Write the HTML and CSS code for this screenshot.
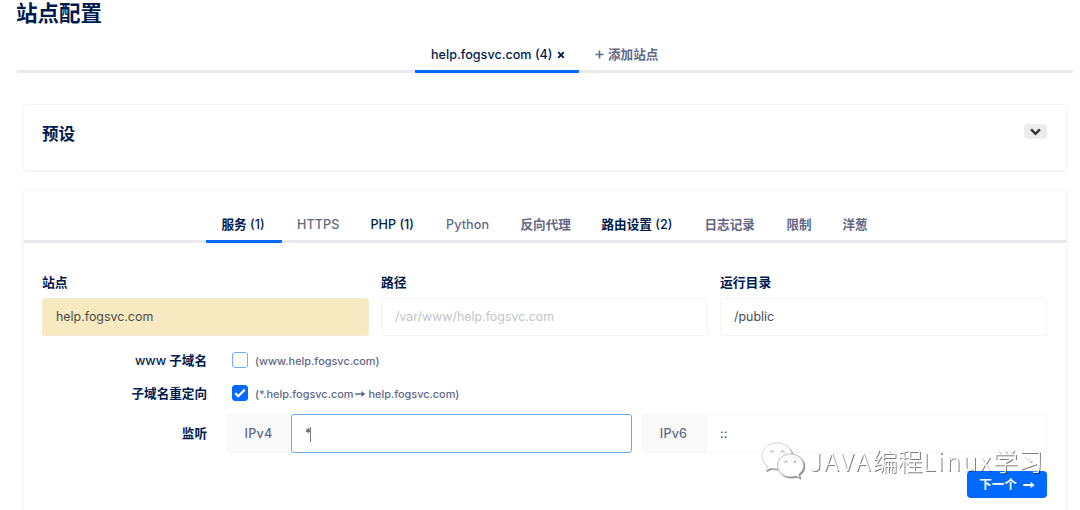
FILE: index.html
```html
<!DOCTYPE html>
<html lang="zh-CN">
<head>
<meta charset="utf-8">
<title>站点配置</title>
<link rel="stylesheet" href="styles.css">
</head>
<body>
<main class="page">
  <h1 class="title">站点配置</h1>
  <nav class="site-tabs">
    <a class="tab active">help.fogsvc.com (4)
      <svg class="close" viewBox="0 0 8 8"><path d="M1.2 1.2l5.6 5.6M6.8 1.2L1.2 6.8"/></svg>
    </a>
    <a class="tab add"><svg class="plus" viewBox="0 0 9 9"><path d="M4.5 .5v8M.5 4.5h8"/></svg>添加站点</a>
  </nav>
  <section class="card preset">
    <h2 class="preset-title">预设</h2>
    <button class="toggle"><svg class="chevron" viewBox="0 0 10 7"><path d="M1 1.2l4 4 4-4"/></svg></button>
  </section>
  <section class="card config">
    <nav class="tabs">
      <a class="tab active"><b>服务</b> (1)</a>
      <a class="tab plain">HTTPS</a>
      <a class="tab used">PHP (1)</a>
      <a class="tab plain">Python</a>
      <a class="tab">反向代理</a>
      <a class="tab used"><b>路由设置</b> (2)</a>
      <a class="tab">日志记录</a>
      <a class="tab">限制</a>
      <a class="tab">洋葱</a>
    </nav>
    <div class="fields">
      <div class="field"><label class="label">站点</label><div class="input changed">help.fogsvc.com</div></div>
      <div class="field"><label class="label">路径</label><div class="input placeholder">/var/www/help.fogsvc.com</div></div>
      <div class="field"><label class="label">运行目录</label><div class="input">/public</div></div>
    </div>
    <div class="row www">
      <label class="row-label"><span class="latin">www</span> 子域名</label>
      <span class="check"></span>
      <span class="hint">(www.help.fogsvc.com)</span>
    </div>
    <div class="row redirect">
      <label class="row-label">子域名重定向</label>
      <span class="check checked"><svg class="tick" viewBox="0 0 12 10"><path d="M1.2 5.2l3.1 3L10.8 1.6"/></svg></span>
      <span class="hint">(*.help.fogsvc.com<svg class="arrow" viewBox="0 0 12 8"><path class="shaft" d="M1 4h7"/><path class="head" d="M7 .8L11.2 4 7 7.2z"/></svg>help.fogsvc.com)</span>
    </div>
    <div class="row listen">
      <label class="row-label">监听</label>
      <div class="group ipv4"><span class="addon">IPv4</span><div class="value focused">*<i class="caret"></i></div></div>
      <div class="group ipv6"><span class="addon">IPv6</span><div class="value">::</div></div>
    </div>
    <div class="actions">
      <button class="next">下一个<svg class="next-arrow" viewBox="0 0 12 8"><path class="shaft" d="M1 4h8"/><path class="head" d="M7.6 .8L11.6 4 7.6 7.2z"/></svg></button>
    </div>
  </section>
  <div class="watermark">
    <svg class="wechat" viewBox="0 0 44 38">
      <path class="back" d="M16 1C7.500 1 1 6.800 1 14c0 4.300 2.200 7.800 5.500 10.200L5 28.500l5-2.400c2 .6 4 .9 6.500.9 8 0 14.500-5.500 14.500-13S24.500 1 16 1z"/>
      <path class="front" d="M29.500 12C22 12 16.500 17 16.500 23.500S22 35 29.500 35c2 0 3.800-.3 5.400-.9l4 2-1.200-3.600c3-2 5-5.200 5-9C42.700 17 37 12 29.500 12z"/>
      <path class="eye" d="M9 10.500q1.700-3.500 3.400 0M20 10.500q1.700-3.500 3.400 0M23.500 20.500q1.500-3 3 0M32.500 20.500q1.500-3 3 0"/>
    </svg>
    <span class="watermark-text"><span class="wide">JAVA</span>编程<span class="wide">Linux</span>学习</span>
  </div>
</main>
</body>
</html>
```
FILE: styles.css
```css
* { box-sizing: border-box; }
body {
  margin: 0;
  background: #fff;
  color: #001b4e;
  font: 500 12.6px/20px Inter, "Noto Sans CJK SC", sans-serif;
}
.page { position: relative; height: 510px; overflow: hidden; }
.title { margin: 0 0 0 16px; padding-top: 1px; height: 38px; font-size: 21.5px; line-height: 25px; font-weight: 700; }
.site-tabs {
  display: grid;
  grid-template-columns: 164px 96px;
  justify-content: center;
  height: 35px;
  margin: 0 7px 0 17px;
  border-bottom: 3px solid #e8eaef;
}
.tab { padding-left: 15.5px; color: #5f6986; font-weight: 700; white-space: nowrap; }
.tab.active { color: #001b4e; font-weight: 450; border-bottom: 3px solid #006aff; border-radius: 1px; }
.tab.used { color: #001b4e; font-weight: 450; }
.tab.plain { font-weight: 450; letter-spacing: .1px; }
.tab b { font-weight: 700; }
.site-tabs .tab { height: 35px; padding: 7px 0 0 16px; }
.close { width: 8px; height: 8px; margin-left: 1px; fill: none; stroke: #001b4e; stroke-width: 1.9; }
.plus { width: 9px; height: 9px; margin-right: 4px; fill: none; stroke: #5f6986; stroke-width: 1.6; }
.card { margin: 0 13px 0 23px; border: 1px solid #f5f6f8; border-radius: 3px; box-shadow: 0 1px 3px rgba(0, 20, 60, .06); }
.preset { display: flex; justify-content: space-between; height: 67px; margin-top: 31px; padding: 17px 19px 0 18px; }
.preset-title { margin: 0; font-size: 16.5px; line-height: 24px; font-weight: 700; }
.toggle { display: flex; align-items: center; justify-content: center; width: 23px; height: 15px; margin-top: 2px; padding: 0; border: 0; border-radius: 4px; background: #ececec; }
.chevron { width: 11px; height: 8px; fill: none; stroke: #333; stroke-width: 2.2; }
.config { height: 340px; margin-top: 18px; }
.tabs {
  display: grid;
  grid-template-columns: 75.5px 73.500px 75.500px 74.500px 81px 103px 82px 56px 41px;
  height: 53px;
  padding-left: 182px;
  border-bottom: 3px solid #e8eaef;
}
.tabs .tab { height: 53px; padding-top: 25px; }
.fields { display: grid; grid-template-columns: repeat(3, 327px); gap: 12px; padding: 29px 0 0 18px; }
.label { display: block; height: 26px; font-size: 12.8px; font-weight: 700; line-height: 22px; }
.input { height: 38px; padding: 0 13px; border: 1px solid #f4f5f6; border-radius: 3px; color: #4a4a4a; font-size: 12.4px; font-weight: 400; line-height: 35px; }
.input.changed { background: #f8eac0; border-color: #f4ead0; }
.input.placeholder { color: #c4c4c6; }
.row { display: flex; align-items: center; }
.row-label { width: 183px; margin-right: 25px; padding-top: 1px; text-align: right; font-weight: 700; }
.latin { font-weight: 500; }
.www { height: 20px; margin-top: 14px; }
.redirect { height: 20px; margin-top: 13px; }
.check { display: flex; align-items: center; justify-content: center; width: 16px; height: 16px; margin-right: 7px; border: 1px solid #73adff; border-radius: 3px; }
.checked { background: #006aff; border-color: #006aff; }
.tick { width: 12px; height: 10px; fill: none; stroke: #fff; stroke-width: 2.3; }
.hint { color: #5f6986; font-size: 10.9px; font-weight: 450; padding-top: 2px; white-space: nowrap; }
.arrow { width: 11px; height: 8px; margin: 0 2px; }
.shaft { fill: none; stroke: currentColor; stroke-width: 1.9; stroke-linecap: round; }
.head { fill: currentColor; }
.listen { height: 39px; margin-top: 11px; }
.listen .row-label { margin-right: 19px; padding-top: 0; }
.group { display: flex; height: 39px; }
.ipv4 { width: 406px; margin-right: 9px; }
.ipv6 { width: 406px; }
.addon { width: 65px; border-radius: 4px 0 0 4px; background: #f9f9fa; color: #5f6986; font-weight: 450; line-height: 39px; text-align: center; letter-spacing: .2px; }
.value { flex: 1; padding-left: 13px; border: 1px solid #f5f6f7; border-radius: 0 3px 3px 0; color: #4a4a4a; font-weight: 400; line-height: 37px; }
.focused { border-color: #6caaf0; border-radius: 3px; }
.caret { display: inline-block; width: 1px; height: 15px; margin-left: -1px; background: #777; vertical-align: -4px; }
.actions { display: flex; justify-content: flex-end; padding: 18px 19px 0 0; }
.next { display: flex; align-items: center; justify-content: center; gap: 6px; width: 80px; height: 27px; padding: 0; border: 0; border-radius: 4px; background: #006aff; color: #fff; font: 700 12.5px/20px Inter, "Noto Sans CJK SC", sans-serif; }
.next-arrow { width: 12px; height: 8px; }
.watermark { position: absolute; left: 761px; top: 442px; display: flex; color: #fff; filter: drop-shadow(1px 1px .3px rgba(0, 0, 0, .5)); }
.wechat { width: 44px; height: 38px; fill: #fff; stroke-width: .8; }
.back { stroke: #ccc; }
.front { stroke: #aaa; }
.eye { fill: none; stroke: #999; stroke-width: 1; }
.watermark-text { margin-left: 4px; font: 300 25px/37px "Noto Sans CJK SC", sans-serif; white-space: nowrap; }
.wide { letter-spacing: 2px; }
```
